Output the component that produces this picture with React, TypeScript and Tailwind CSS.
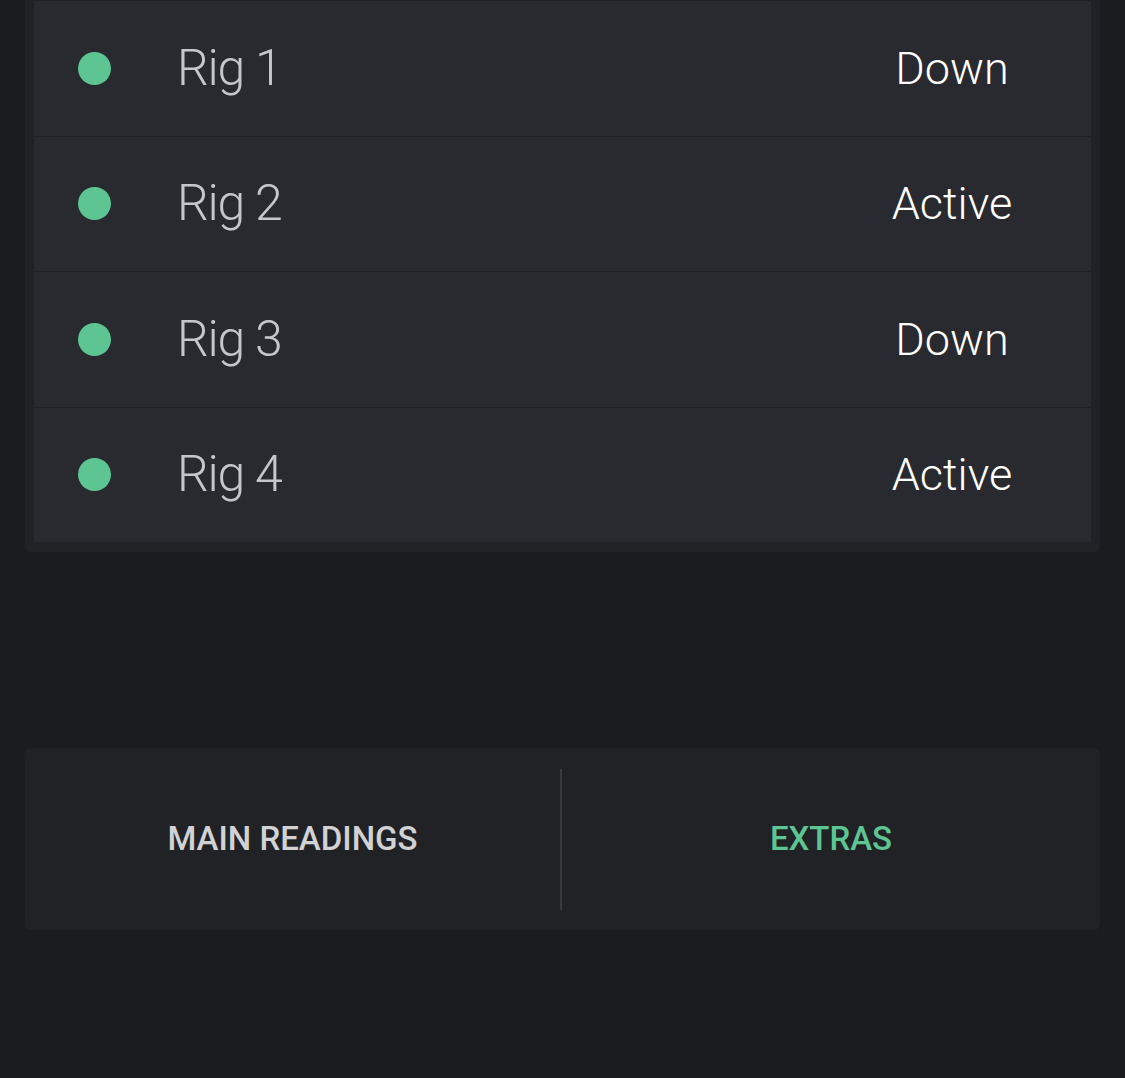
import React from 'react'

const rigs = [
  { name: 'Rig 1', status: 'Down' },
  { name: 'Rig 2', status: 'Active' },
  { name: 'Rig 3', status: 'Down' },
  { name: 'Rig 4', status: 'Active' },
]

export default function App() {
  return (
    <div
      className="min-h-screen h-[1078px] bg-[#1b1c20] px-[25px]"
      style={{ fontFamily: 'Roboto, "Open Sans", sans-serif' }}
    >
      {/* Rig list card */}
      <div className="bg-[#212226] rounded-b-md px-[9px] pb-[10px]">
        <div className="bg-[#292a2f]">
          {rigs.map((rig) => (
            <div
              key={rig.name}
              className="h-[135.5px] flex items-center border-t border-[#1f2024] pl-[44px] pr-[49px]"
            >
              <span className="w-[33px] h-[33px] rounded-full bg-[#5cc592] shrink-0" />
              <span className="ml-[66px] text-[50px] font-light text-[#c6c7ca] tracking-tight">
                {rig.name}
              </span>
              <span className="ml-auto w-[180px] text-center text-[45px] font-light text-white">
                {rig.status}
              </span>
            </div>
          ))}
        </div>
      </div>

      {/* Tabs */}
      <div className="mt-[196px] h-[182px] bg-[#212226] rounded-md flex items-center">
        <div className="w-[535px] flex items-center justify-center text-[33px] font-medium text-[#d2d2d4]">
          MAIN READINGS
        </div>
        <div className="w-[2px] h-[141px] bg-[#393a3e]" />
        <div className="flex-1 flex items-center justify-center text-[33px] font-medium text-[#5cc592]">
          EXTRAS
        </div>
      </div>
    </div>
  )
}
